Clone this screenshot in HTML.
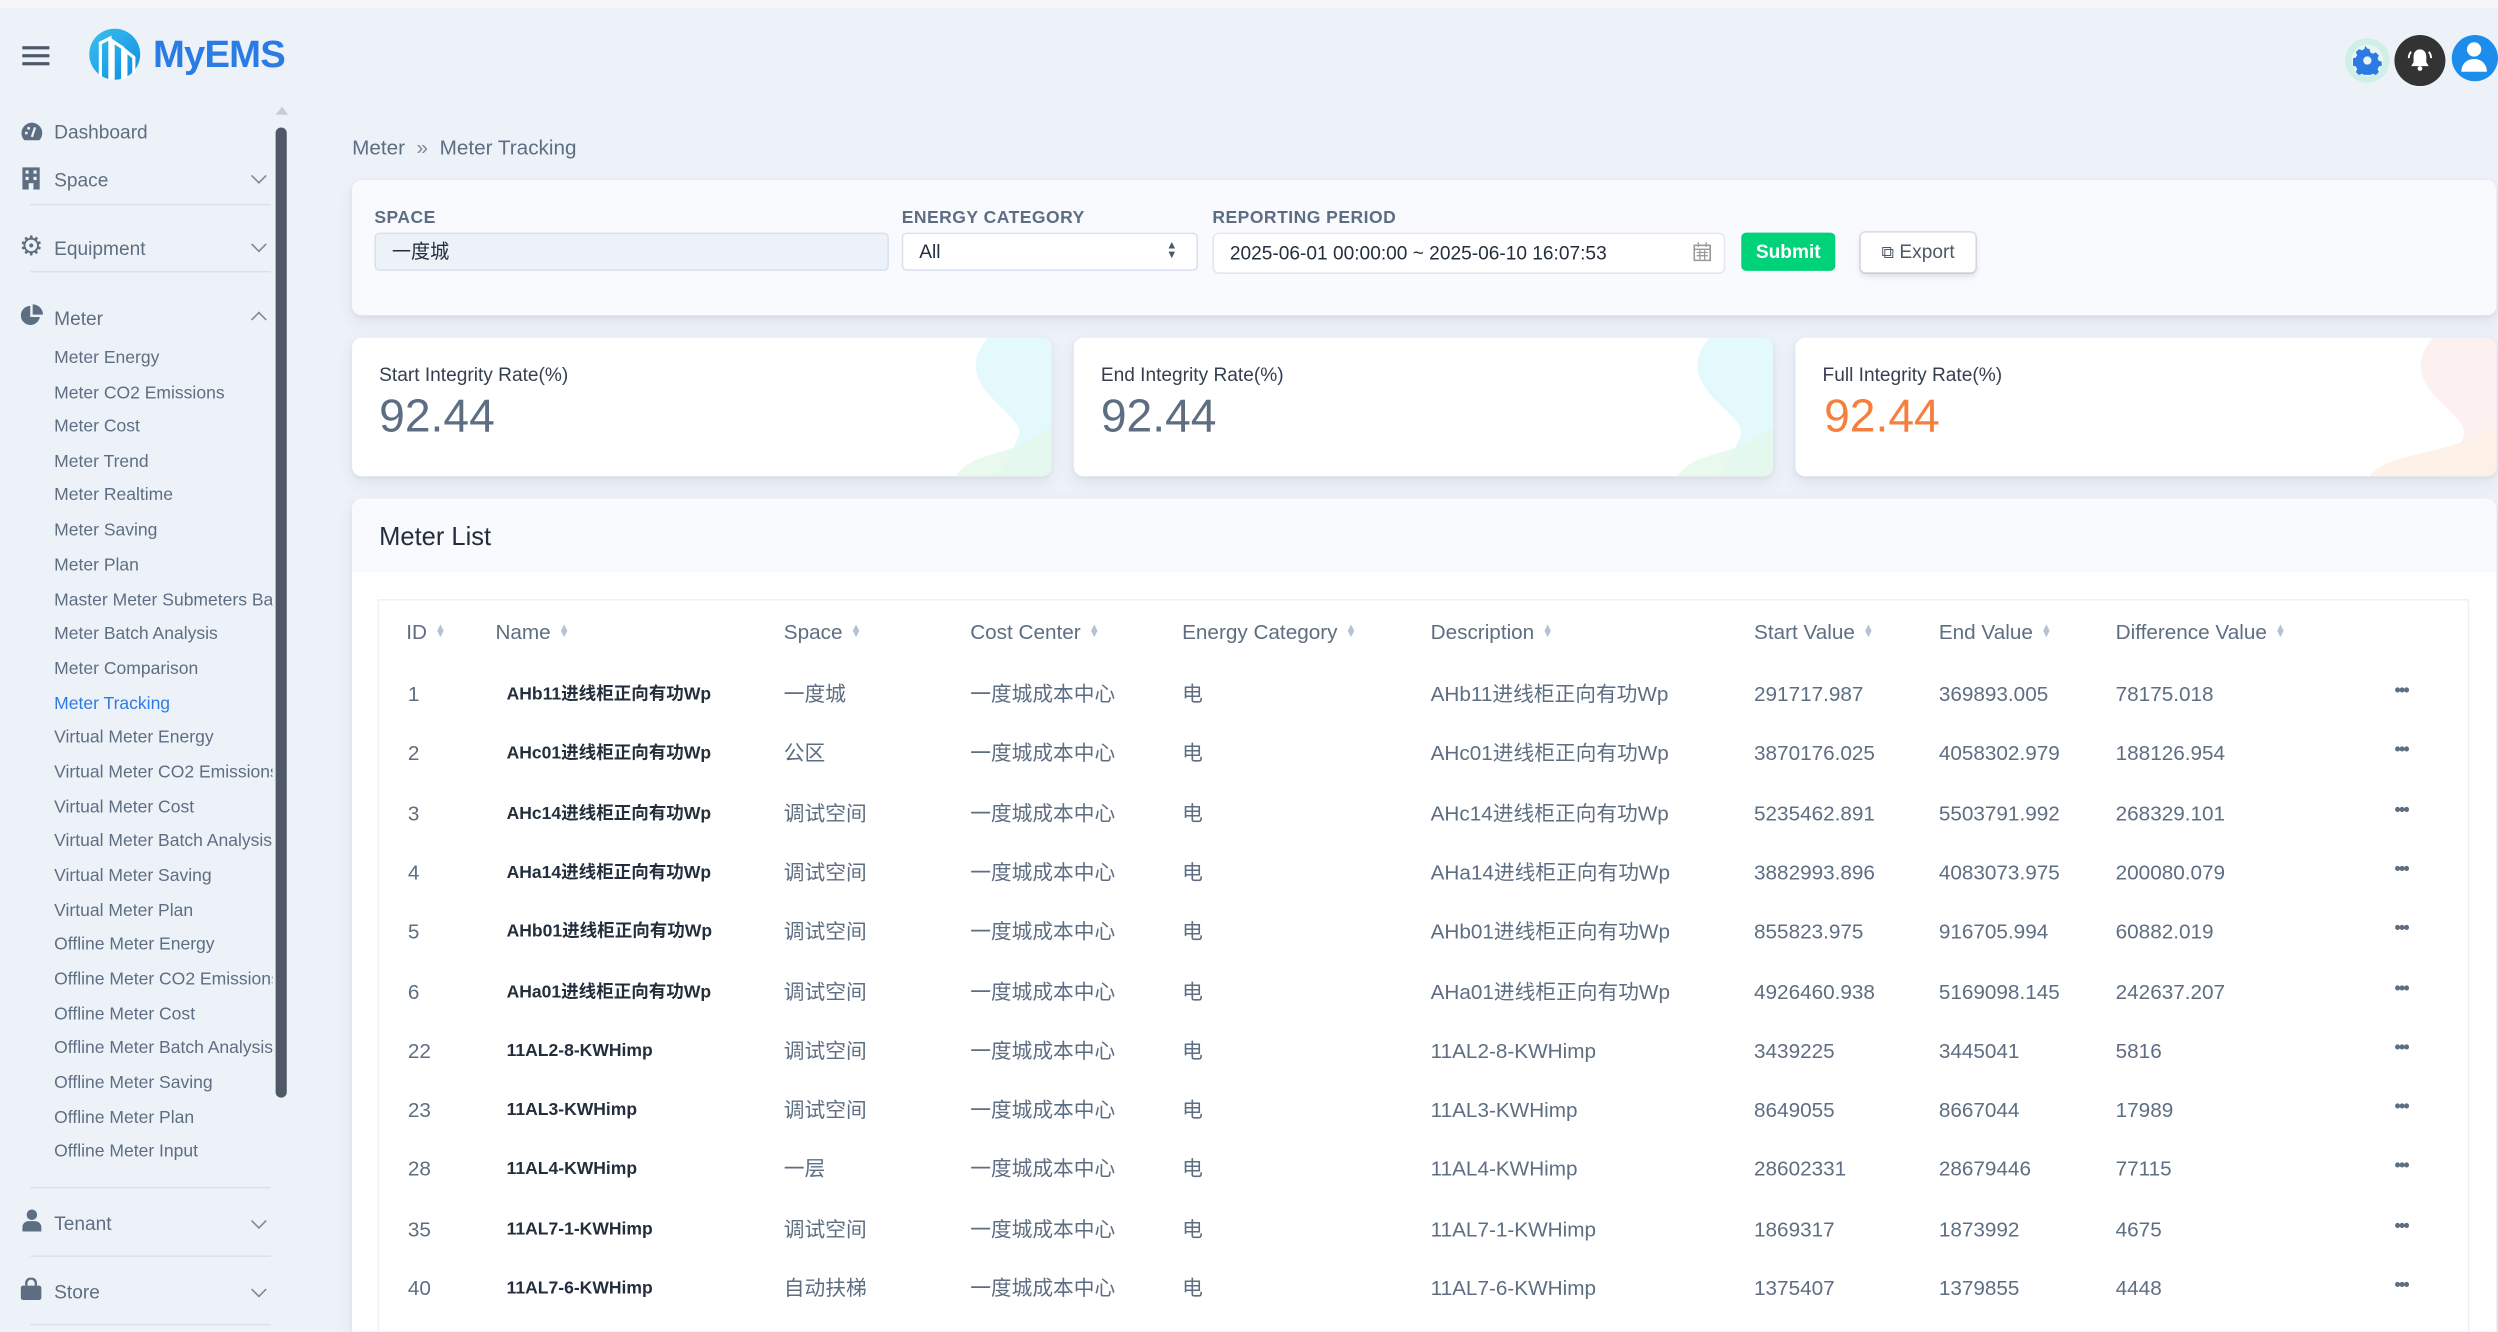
<!DOCTYPE html>
<html><head><meta charset="utf-8">
<style>
*{margin:0;padding:0;box-sizing:border-box}
html,body{width:2498px;height:1332px;overflow:hidden;background:#edf2f9}
#w{position:absolute;left:0;top:0;width:1568px;height:836px;transform:scale(1.59311);transform-origin:0 0;background:#edf2f9;font-family:"Liberation Sans","Noto Sans CJK SC",sans-serif;color:#5e6e82;overflow:hidden}
.a{position:absolute;white-space:nowrap}
.top{position:absolute;left:0;top:0;width:1568px;height:5px;background:#f5f6f8}
.nav{font-size:12px;color:#5e6e82}
.sub{font-size:11px;color:#5e6e82;left:34px}
.div{position:absolute;left:19px;width:151px;height:1px;background:#d8e2ef}
.chev{position:absolute;width:7px;height:7px;border-right:1px solid #7d899b;border-bottom:1px solid #7d899b;transform:rotate(45deg)}
.card{position:absolute;background:#fff;border-radius:6px;box-shadow:0 4px 10px rgba(65,69,88,.08),0 1px 3px rgba(0,0,0,.06)}
.lbl{font-size:11px;font-weight:bold;letter-spacing:.3px;color:#5e6e82}
.th{font-size:13px;color:#5e6e82;top:389px}
.s{display:inline-block;margin-left:5px;font-size:7px;color:#b6c1d2;vertical-align:1px;line-height:4px}
.td{font-size:13px;color:#5e6e82;line-height:16px}
.nm{font-size:11px;color:#232e3c;font-weight:bold;line-height:16px}
.dots{font-size:11px;color:#5e6e82;font-weight:bold;letter-spacing:-1px;line-height:16px}
</style></head><body><div id="w">
<div class="top"></div>
<div class="a" style="left:14px;top:29px;width:17px;height:2px;background:#4d5969"></div>
<div class="a" style="left:14px;top:34px;width:17px;height:2px;background:#4d5969"></div>
<div class="a" style="left:14px;top:39px;width:17px;height:2px;background:#4d5969"></div>
<svg class="a" style="left:56px;top:18px" width="34" height="34" viewBox="0 0 34 34"><defs><linearGradient id="g" x1="0" y1="0" x2="1" y2="1"><stop offset="0" stop-color="#3cc0f0"/><stop offset="1" stop-color="#0d8ee0"/></linearGradient></defs><circle cx="16" cy="16" r="16" fill="url(#g)"/><path d="M7 30V9l6-3v26M15 32V8l6 4v20M23 31V14l5 4v10" fill="none" stroke="#fff" stroke-width="2"/></svg>
<div class="a" style="left:96px;top:21px;font-size:24px;font-weight:bold;color:#2a7be4;letter-spacing:-.5px">MyEMS</div>
<div class="a" style="left:173px;top:67px;width:0;height:0;border-left:4px solid transparent;border-right:4px solid transparent;border-bottom:5px solid #c5ccd6"></div>
<div class="a" style="left:173px;top:80px;width:7px;height:609px;border-radius:4px;background:#4f5866"></div>
<svg class="a" style="left:13px;top:76px" width="14" height="13" viewBox="0 0 14 13"><path d="M7 1A6.5 6.5 0 0 0 .5 7.5c0 1.8.7 3.4 1.8 4.5h9.4c1.1-1.1 1.8-2.7 1.8-4.5A6.5 6.5 0 0 0 7 1z" fill="#5e6e82"/><path d="M7 10L9 4" stroke="#edf2f9" stroke-width="1.4"/><circle cx="3.5" cy="7.5" r=".9" fill="#edf2f9"/><circle cx="5" cy="4.5" r=".9" fill="#edf2f9"/></svg>
<div class="a nav" style="left:34px;top:76px">Dashboard</div>
<svg class="a" style="left:14px;top:105px" width="11" height="14"><rect width="11" height="14" fill="#5e6e82"/><rect x="2" y="2" width="2" height="2" fill="#edf2f9"/><rect x="7" y="2" width="2" height="2" fill="#edf2f9"/><rect x="2" y="6" width="2" height="2" fill="#edf2f9"/><rect x="7" y="6" width="2" height="2" fill="#edf2f9"/><rect x="4" y="10" width="3" height="4" fill="#edf2f9"/></svg>
<div class="a nav" style="left:34px;top:106px">Space</div>
<div class="chev" style="left:159px;top:107px"></div>
<div class="div" style="top:128px"></div>
<div class="a" style="left:12px;top:146px;font-size:17px;color:#5e6e82;line-height:17px">⚙</div>
<div class="a nav" style="left:34px;top:149px">Equipment</div>
<div class="chev" style="left:159px;top:150px"></div>
<div class="div" style="top:170px"></div>
<svg class="a" style="left:13px;top:191px" width="14" height="14" viewBox="0 0 14 14"><path d="M6 1A6 6 0 1 0 12 8H6z" fill="#5e6e82"/><path d="M7.5 0v6.5H14A6.5 6.5 0 0 0 7.5 0z" fill="#5e6e82"/></svg>
<div class="a nav" style="left:34px;top:193px">Meter</div>
<div class="chev" style="left:159px;top:197px;transform:rotate(-135deg)"></div>
<div class="a sub" style="top:219px">Meter Energy</div>
<div class="a sub" style="top:241px">Meter CO2 Emissions</div>
<div class="a sub" style="top:262px">Meter Cost</div>
<div class="a sub" style="top:284px">Meter Trend</div>
<div class="a sub" style="top:305px">Meter Realtime</div>
<div class="a sub" style="top:327px">Meter Saving</div>
<div class="a sub" style="top:349px">Meter Plan</div>
<div class="a sub" style="top:371px;width:137px;overflow:hidden">Master Meter Submeters Balance</div>
<div class="a sub" style="top:392px">Meter Batch Analysis</div>
<div class="a sub" style="top:414px">Meter Comparison</div>
<div class="a sub" style="top:436px;color:#2c7be5">Meter Tracking</div>
<div class="a sub" style="top:457px">Virtual Meter Energy</div>
<div class="a sub" style="top:479px;width:137px;overflow:hidden">Virtual Meter CO2 Emissions</div>
<div class="a sub" style="top:501px">Virtual Meter Cost</div>
<div class="a sub" style="top:522px;width:137px;overflow:hidden">Virtual Meter Batch Analysis</div>
<div class="a sub" style="top:544px">Virtual Meter Saving</div>
<div class="a sub" style="top:566px">Virtual Meter Plan</div>
<div class="a sub" style="top:587px">Offline Meter Energy</div>
<div class="a sub" style="top:609px;width:137px;overflow:hidden">Offline Meter CO2 Emissions</div>
<div class="a sub" style="top:631px">Offline Meter Cost</div>
<div class="a sub" style="top:652px;width:137px;overflow:hidden">Offline Meter Batch Analysis</div>
<div class="a sub" style="top:674px">Offline Meter Saving</div>
<div class="a sub" style="top:696px">Offline Meter Plan</div>
<div class="a sub" style="top:717px">Offline Meter Input</div>
<div class="div" style="top:745px"></div>
<svg class="a" style="left:14px;top:759px" width="12" height="14"><circle cx="6" cy="3.5" r="3.3" fill="#5e6e82"/><path d="M0 14v-2.5C0 9 2 7.5 4 7.5h4c2 0 4 1.5 4 4V14z" fill="#5e6e82"/></svg>
<div class="a nav" style="left:34px;top:761px">Tenant</div>
<div class="chev" style="left:159px;top:763px"></div>
<div class="div" style="top:788px"></div>
<svg class="a" style="left:13px;top:802px" width="13" height="14"><path d="M3.5 5V3.5a3 3 0 0 1 6 0V5" fill="none" stroke="#5e6e82" stroke-width="1.5"/><rect x="0" y="5" width="13" height="9" rx="1.5" fill="#5e6e82"/></svg>
<div class="a nav" style="left:34px;top:804px">Store</div>
<div class="chev" style="left:159px;top:806px"></div>
<div class="div" style="top:831px"></div>
<div class="a" style="left:1472px;top:24px;width:28px;height:28px;border-radius:50%;background:#d0efe6"></div>
<div class="a" style="left:1476px;top:28px;width:20px;height:20px;border-radius:50%;background:#e8f5f5"></div>
<svg class="a" style="left:1477px;top:29px" width="18" height="18" viewBox="0 0 18 18"><path d="M9 1.5l1.4.3.4 2 1.6.9 1.9-.8 1.9 1.9-.8 1.9.9 1.6 2 .4v2.6l-2 .4-.9 1.6.8 1.9-1.9 1.9-1.9-.8-1.6.9-.4 2H7.6l-.4-2-1.6-.9-1.9.8-1.9-1.9.8-1.9-.9-1.6-2-.4V7.6l2-.4.9-1.6-.8-1.9 1.9-1.9 1.9.8 1.6-.9.4-2z" fill="#2c7be5"/><circle cx="9" cy="9" r="2.6" fill="#e8f5f5"/></svg>
<div class="a" style="left:1503px;top:22px;width:32px;height:32px;border-radius:50%;background:#333"></div>
<svg class="a" style="left:1511px;top:29px" width="16" height="17" viewBox="0 0 16 17"><path d="M8 2c-2.5 0-4 2-4 4.5V10l-1.5 2.5h11L12 10V6.5C12 4 10.5 2 8 2z" fill="#fff"/><circle cx="8" cy="14" r="1.5" fill="#fff"/><path d="M2.5 3.5Q1 5 1 7.5M13.5 3.5Q15 5 15 7.5" stroke="#fff" stroke-width="1.2" fill="none"/></svg>
<div class="a" style="left:1539px;top:22px;width:29px;height:29px;border-radius:50%;background:#1d8deb"></div>
<svg class="a" style="left:1542px;top:24px" width="22" height="24" viewBox="0 0 22 24"><circle cx="11" cy="7" r="4.5" fill="#fff"/><path d="M3 21c0-5 3.5-8 8-8s8 3 8 8z" fill="#fff"/></svg>
<div class="a" style="left:221px;top:85px;font-size:13px;color:#5e6e82">Meter &nbsp;<span style="color:#7d899b">»</span>&nbsp; Meter Tracking</div>
<div class="card" style="left:221px;top:113px;width:1346px;height:85px;background:#f9fafd"></div>
<div class="a lbl" style="left:235px;top:131px">SPACE</div>
<div class="a" style="left:235px;top:146px;width:323px;height:24px;background:#edf2f9;border:1px solid #d8e2ef;border-radius:3px;font-size:12px;color:#232e3c;padding:0 0 0 10px;line-height:22px">一度城</div>
<div class="a lbl" style="left:566px;top:131px">ENERGY CATEGORY</div>
<div class="a" style="left:566px;top:146px;width:186px;height:24px;background:#fff;border:1px solid #d8e2ef;border-radius:3px;font-size:12px;color:#232e3c;padding:4px 0 0 10px">All<span style="position:absolute;right:12px;top:5px;font-size:7px;line-height:6px;color:#4d5969">▲<br>▼</span></div>
<div class="a lbl" style="left:761px;top:131px">REPORTING PERIOD</div>
<div class="a" style="left:761px;top:146px;width:322px;height:26px;background:#fff;border:1px solid #e3e8ef;border-radius:4px;font-size:12px;color:#232e3c;padding:5px 0 0 10px">2025-06-01 00:00:00 ~ 2025-06-10 16:07:53</div>
<svg class="a" style="left:1063px;top:152px" width="11" height="12"><rect x=".5" y="2" width="10" height="9.5" fill="none" stroke="#999"/><path d="M.5 4.5h10M3 0v3M8 0v3M2 6.5h7M2 8.5h7M4 5v6M7 5v6" stroke="#999" stroke-width=".8"/></svg>
<div class="a" style="left:1093px;top:146px;width:59px;height:24px;background:#00d27a;border-radius:3px;color:#fff;font-size:12px;font-weight:bold;text-align:center;line-height:24px">Submit</div>
<div class="a" style="left:1168px;top:146px;width:72px;height:25px;background:#fff;border-radius:3px;box-shadow:0 0 0 1px rgba(43,45,80,.12),0 2px 4px rgba(43,45,80,.15);color:#4d5969;font-size:12px;text-align:center;line-height:25px"><span style="font-size:11px">⧉</span> Export</div>
<div class="card" style="left:221px;top:212px;width:439px;height:87px;overflow:hidden">
 <svg style="position:absolute;right:0;top:0" width="60" height="87"><path d="M20 0C-5 30 40 45 40 60C35 75 25 87 25 87H60V0z" fill="#dcf8fb" opacity=".8"/><path d="M0 87C10 70 40 75 60 55V87z" fill="#e3f8ea" opacity=".8"/></svg>
 <div class="a" style="left:17px;top:16px;font-size:12px;color:#344050">Start Integrity Rate(%)</div>
 <div class="a" style="left:17px;top:34px;font-size:29px;color:#5e6e82">92.44</div>
</div>
<div class="card" style="left:674px;top:212px;width:439px;height:87px;overflow:hidden">
 <svg style="position:absolute;right:0;top:0" width="60" height="87"><path d="M20 0C-5 30 40 45 40 60C35 75 25 87 25 87H60V0z" fill="#dcf8fb" opacity=".8"/><path d="M0 87C10 70 40 75 60 55V87z" fill="#e3f8ea" opacity=".8"/></svg>
 <div class="a" style="left:17px;top:16px;font-size:12px;color:#344050">End Integrity Rate(%)</div>
 <div class="a" style="left:17px;top:34px;font-size:29px;color:#5e6e82">92.44</div>
</div>
<div class="card" style="left:1127px;top:212px;width:440px;height:87px;overflow:hidden">
 <svg style="position:absolute;right:0;top:0" width="80" height="87"><path d="M40 0C15 30 60 45 60 60C55 75 45 87 45 87H80V0z" fill="#fdeeee" opacity=".9"/><path d="M0 87C15 70 50 75 80 55V87z" fill="#fdf0e5" opacity=".9"/></svg>
 <div class="a" style="left:17px;top:16px;font-size:12px;color:#344050">Full Integrity Rate(%)</div>
 <div class="a" style="left:18px;top:34px;font-size:29px;color:#f5803e">92.44</div>
</div>
<div class="card" style="left:221px;top:313px;width:1346px;height:523px;overflow:hidden;border-radius:6px 6px 0 0">
 <div style="position:absolute;left:0;top:0;width:100%;height:46px;background:#f9fafd"></div>
 <div class="a" style="left:17px;top:16px;font-size:16px;color:#232e3c">Meter List</div>
 <div style="position:absolute;left:16px;top:63px;width:1313px;height:470px;border:1px solid #edf2f9"></div>
</div>
<div class="a th" style="left:255px">ID<span class="s">▲<br>▼</span></div>
<div class="a th" style="left:311px">Name<span class="s">▲<br>▼</span></div>
<div class="a th" style="left:492px">Space<span class="s">▲<br>▼</span></div>
<div class="a th" style="left:609px">Cost Center<span class="s">▲<br>▼</span></div>
<div class="a th" style="left:742px">Energy Category<span class="s">▲<br>▼</span></div>
<div class="a th" style="left:898px">Description<span class="s">▲<br>▼</span></div>
<div class="a th" style="left:1101px">Start Value<span class="s">▲<br>▼</span></div>
<div class="a th" style="left:1217px">End Value<span class="s">▲<br>▼</span></div>
<div class="a th" style="left:1328px">Difference Value<span class="s">▲<br>▼</span></div>
<div id="rows"></div>
<script>
var d=[["1","AHb11进线柜正向有功Wp","一度城","291717.987","369893.005","78175.018"],
["2","AHc01进线柜正向有功Wp","公区","3870176.025","4058302.979","188126.954"],
["3","AHc14进线柜正向有功Wp","调试空间","5235462.891","5503791.992","268329.101"],
["4","AHa14进线柜正向有功Wp","调试空间","3882993.896","4083073.975","200080.079"],
["5","AHb01进线柜正向有功Wp","调试空间","855823.975","916705.994","60882.019"],
["6","AHa01进线柜正向有功Wp","调试空间","4926460.938","5169098.145","242637.207"],
["22","11AL2-8-KWHimp","调试空间","3439225","3445041","5816"],
["23","11AL3-KWHimp","调试空间","8649055","8667044","17989"],
["28","11AL4-KWHimp","一层","28602331","28679446","77115"],
["35","11AL7-1-KWHimp","调试空间","1869317","1873992","4675"],
["40","11AL7-6-KWHimp","自动扶梯","1375407","1379855","4448"]];
var h="";
d.forEach(function(r,i){var y=428+i*37.3;
function c(x,t,cl,dy){h+='<div class="a '+cl+'" style="left:'+x+'px;top:'+(y+(dy||0))+'px">'+t+'</div>';}
c(256,r[0],"td");c(318,r[1],"nm");c(492,r[2],"td");c(609,"一度城成本中心","td");c(742,"电","td");
c(898,r[1],"td");c(1101,r[3],"td");c(1217,r[4],"td");c(1328,r[5],"td");c(1503,"•••","dots",-2);});
document.getElementById("rows").innerHTML=h;
</script>
</div></body></html>
